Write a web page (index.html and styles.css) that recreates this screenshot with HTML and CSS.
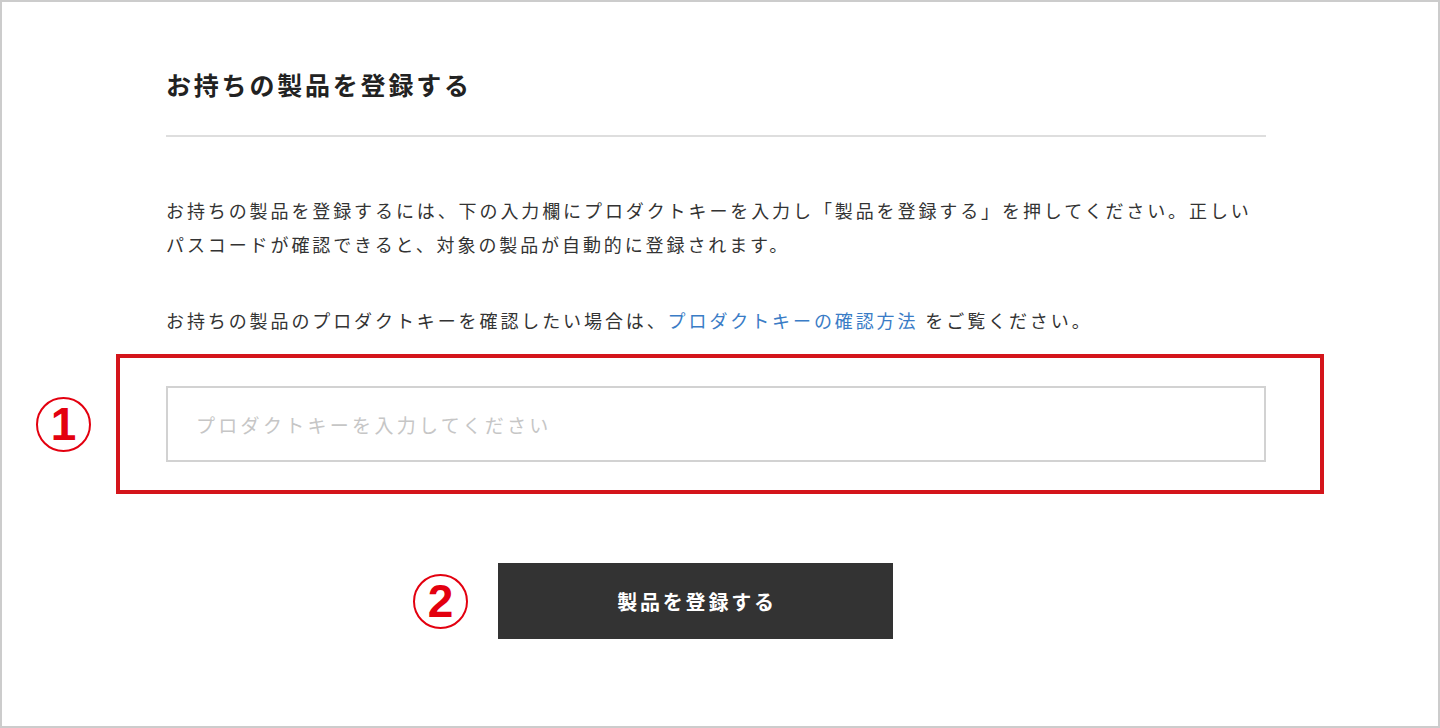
FILE: index.html
```html
<!DOCTYPE html>
<html lang="ja">

<head>
  <meta charset="UTF-8" />
  <meta name="viewport" content="width=device-width, initial-scale=1.0" />
  <title>製品登録</title>
  <link rel="stylesheet" href="styles.css">
</head>

<body>
  <div class="frame">
    <section class="content">
      <h1 class="title">お持ちの製品を登録する</h1>
      <p class="lead">お持ちの製品を登録するには、下の入力欄にプロダクトキーを入力し「製品を登録する」を押してください。正しい<br />パスコードが確認できると、対象の製品が自動的に登録されます。</p>
      <p class="lead">お持ちの製品のプロダクトキーを確認したい場合は、<a href="#" class="link">プロダクトキーの確認方法</a> をご覧ください。</p>
    </section>

    <div class="annot-row">
      <span class="marker">1</span>
      <div class="annot-box">
        <input type="text" class="key-input" placeholder="プロダクトキーを入力してください" />
      </div>
    </div>

    <div class="submit-row">
      <span class="marker">2</span>
      <button type="button" class="submit">製品を登録する</button>
    </div>
  </div>
</body>

</html>
```

FILE: styles.css
```css
body {
  margin: 0;
  background-color: #fff;
  font-family: "Noto Sans CJK JP", "Noto Sans", sans-serif;
  color: #333;
}

.frame {
  height: 728px;
  box-sizing: border-box;
  border: 2px solid #cccccc;
}

.content {
  margin-left: 164px;
  width: 1100px;
}

.title {
  margin: 64px 0 0 0;
  padding-bottom: 33px;
  border-bottom: 2px solid #dedede;
  font-size: 25px;
  line-height: 36px;
  font-weight: bold;
  letter-spacing: 2.8px;
  color: #222;
}

.lead {
  margin: 56px 0 0 0;
  font-size: 18px;
  line-height: 34px;
  letter-spacing: 2.9px;
}

.lead + .lead {
  margin-top: 42px;
}

.link {
  color: #3a7cc6;
  text-decoration: none;
}

/* annotation rows */
.annot-row {
  display: flex;
  align-items: center;
  margin-top: 17px;
  padding-left: 34px;
  gap: 25px;
}

.marker {
  width: 55px;
  height: 55px;
  box-sizing: border-box;
  border: 2.5px solid #e3000f;
  border-radius: 50%;
  display: flex;
  align-items: center;
  justify-content: center;
  color: #e3000f;
  font-family: "Liberation Sans", sans-serif;
  font-weight: bold;
  font-size: 46px;
  line-height: 1;
  flex-shrink: 0;
}

.annot-box {
  width: 1208px;
  box-sizing: border-box;
  border: 4px solid #d4151b;
  padding: 28px 54px 28px 46px;
}

.key-input {
  display: block;
  width: 100%;
  height: 76px;
  box-sizing: border-box;
  border: 2px solid #d2d2d2;
  padding: 0 0 0 28px;
  outline: none;
  font-family: "Noto Sans CJK JP", sans-serif;
  font-size: 19px;
  letter-spacing: 3.3px;
  color: #333;
}

.key-input::placeholder {
  color: #c6c6c6;
}

.submit-row {
  display: flex;
  align-items: center;
  margin-top: 69px;
  padding-left: 411px;
  gap: 30px;
}

.submit {
  width: 395px;
  height: 76px;
  border: none;
  background-color: #333;
  color: #fff;
  font-family: "Noto Sans CJK JP", sans-serif;
  font-size: 20px;
  font-weight: bold;
  letter-spacing: 2.8px;
  padding: 0 0 0 3px;
}
```
